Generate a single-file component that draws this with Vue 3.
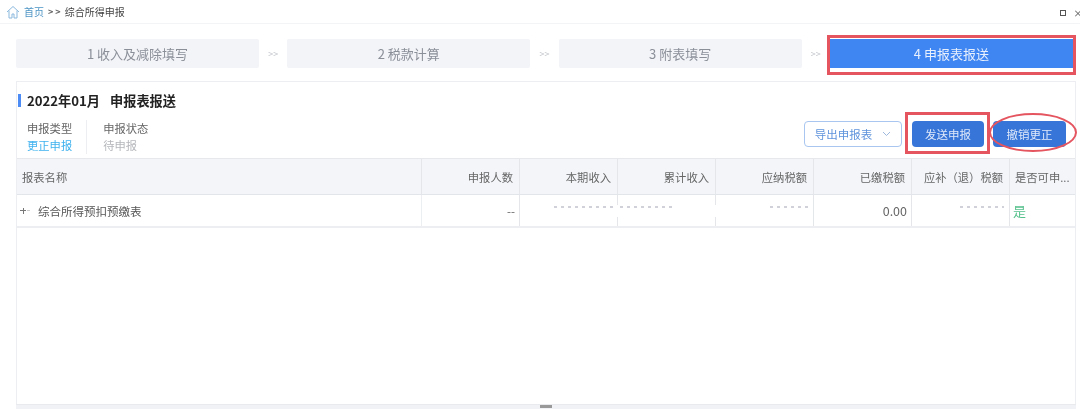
<script setup>
const steps = [
  { label: '1 收入及减除填写' },
  { label: '2 税款计算' },
  { label: '3 附表填写' },
  { label: '4 申报表报送', active: true },
]
const cols = ['申报人数', '本期收入', '累计收入', '应纳税额', '已缴税额', '应补（退）税额']
</script>

<template>
  <div class="page">
    <header class="crumb">
      <svg class="home" width="14" height="14" viewBox="0 0 14 14" fill="none" stroke="#8bb9de" stroke-width="1">
        <path d="M1 7 7 1.5 13 7M3 5.6V13h3V9h2v4h3V5.6" />
      </svg>
      <span class="link">首页</span>
      <span class="sep">&gt; &gt;</span>
      <span class="cur">综合所得申报</span>
      <span class="win">
        <i class="max"></i>
        <svg width="5" height="7" viewBox="0 0 5 7" fill="none" stroke="#555" stroke-width="1"><path d="M0 .5l6 6M6 .5l-6 6" /></svg>
      </span>
    </header>

    <nav class="steps">
      <template v-for="(s, i) in steps" :key="s.label">
        <span v-if="i" class="arrow">&gt;&gt;</span>
        <div class="step" :class="{ active: s.active }">{{ s.label }}</div>
      </template>
    </nav>

    <section class="panel">
      <h2 class="title">2022年01月<span class="title-sub">申报表报送</span></h2>

      <div class="toolbar">
        <div class="meta">
          <div class="meta-item first">
            <div class="k">申报类型</div>
            <div class="v cyan">更正申报</div>
          </div>
          <div class="meta-item">
            <div class="k">申报状态</div>
            <div class="v grey">待申报</div>
          </div>
        </div>
        <div class="actions">
          <button class="btn outline">
            导出申报表
            <svg width="9" height="6" viewBox="0 0 9 6" fill="none" stroke="#9db8dc" stroke-width="1"><path d="M1 1l3.5 3.5L8 1" /></svg>
          </button>
          <button class="btn solid send">发送申报</button>
          <button class="btn solid undo">撤销更正</button>
        </div>
      </div>

      <div class="thead row">
        <div class="cell name">报表名称</div>
        <div v-for="c in cols" :key="c" class="cell num">{{ c }}</div>
        <div class="cell last">是否可申...</div>
      </div>

      <div class="tbody row">
        <div class="cell name body-name">
          <i class="plus"></i>
          综合所得预扣预缴表
        </div>
        <div class="cell num">--</div>
        <div class="cell num blank gap"><i class="trace t1"></i></div>
        <div class="cell num blank gap"><i class="trace t2"></i></div>
        <div class="cell num blank"><i class="trace t3"></i></div>
        <div class="cell num zero">0.00</div>
        <div class="cell num blank"><i class="trace t4"></i></div>
        <div class="cell last green">是</div>
      </div>

      <div class="spacer"></div>
    </section>

    <footer class="foot"><i class="handle"></i></footer>
  </div>
</template>

<style scoped>
.page {
  width: 1080px;
  height: 409px;
  overflow: hidden;
  display: flex;
  flex-direction: column;
  background: #fff;
  font-family: "Noto Sans CJK SC", "Noto Sans", sans-serif;
  filter: blur(0.4px);
}
.crumb {
  height: 24px;
  flex: none;
  box-sizing: border-box;
  border-bottom: 1px solid #f3f4f6;
  display: flex;
  align-items: center;
  padding-left: 6px;
  font-size: 10px;
  color: #444;
}
.home { margin-right: 4px; }
.link { color: #4d94c4; }
.sep { margin: 0 4px 0 4px; font-size: 9px; font-weight: 700; color: #666; }
.win {
  margin-left: auto;
  display: flex;
  align-items: center;
  gap: 9px;
  padding-top: 3px;
}
.max { width: 4px; height: 4px; border: 1px solid #555; }
.steps {
  display: flex;
  align-items: center;
  margin: 15px 8px 0 16px;
  height: 29px;
  flex: none;
}
.step {
  flex: none;
  width: 243px;
  height: 29px;
  line-height: 29px;
  text-align: center;
  background: #f3f4f8;
  border-radius: 2px;
  color: #8a8f98;
  font-size: 13px;
}
.step.active {
  position: relative;
  background: #3f86f2;
  color: #e8f0fd;
  border-radius: 0;
}
.step.active::after {
  content: "";
  position: absolute;
  left: -3px;
  top: -4px;
  right: -3px;
  bottom: -7px;
  border: 3px solid #e45560;
  box-shadow: inset 0 -3px 0 #fff;
}
.arrow {
  flex: none;
  width: 28.3px;
  text-align: center;
  color: #c2c5ca;
  font-size: 9px;
}
.panel {
  flex: 1;
  margin: 13px 4px 0 16px;
  border: 1px solid #eceef1;
  border-bottom: 0;
  display: flex;
  flex-direction: column;
  min-height: 0;
}
.title {
  position: relative;
  margin: 9px 0 0 10px;
  font-size: 13.2px;
  line-height: 19px;
  font-weight: 700;
  color: #222;
}
.title-sub { margin-left: 10px; }
.title::before {
  content: "";
  position: absolute;
  left: -9px;
  top: 3px;
  width: 3px;
  height: 13px;
  background: #4d8cf5;
}
.toolbar {
  display: flex;
  justify-content: space-between;
  align-items: flex-start;
  height: 38px;
  margin-top: 10px;
}
.meta { display: flex; padding-left: 10px; }
.meta-item { font-size: 11.3px; line-height: 17px; }
.meta-item.first {
  padding-right: 14px;
  margin-right: 16px;
  border-right: 1px solid #eceef1;
}
.k { color: #666; }
.v.cyan { color: #3fb2ee; }
.v.grey { color: #b5b7bb; }
.actions {
  display: flex;
  align-items: center;
  gap: 10px;
  padding: 1px 9px 0 0;
}
.btn {
  height: 26px;
  box-sizing: border-box;
  border-radius: 4px;
  font: inherit;
  font-size: 11.5px;
  padding: 0;
}
.outline {
  width: 98px;
  border: 1px solid #a9c6f0;
  background: #fff;
  color: #5f93dc;
  display: flex;
  align-items: center;
  justify-content: center;
  gap: 10px;
}
.solid {
  width: 72px;
  border: 0;
  background: #3875d8;
  color: #dfe9fa;
  position: relative;
}
.send::after {
  content: "";
  position: absolute;
  left: -7px;
  top: -9px;
  right: -6px;
  bottom: -7px;
  border: 3px solid #e45560;
}
.undo { width: 73px; margin-left: -1px; }
.undo::after {
  content: "";
  position: absolute;
  left: -4px;
  top: -8px;
  right: -11px;
  bottom: -5px;
  border: 2.5px solid #e45560;
  border-radius: 50%;
}
.row {
  display: flex;
  flex: none;
  box-sizing: border-box;
}
.thead {
  height: 37px;
  background: #f3f5f9;
  border-top: 1px solid #e6e8ec;
  border-bottom: 1px solid #e2e5ea;
  color: #666;
  font-size: 11.3px;
}
.tbody {
  height: 33px;
  border-bottom: 2px solid #eceef1;
  color: #555;
  font-size: 11.5px;
}
.cell {
  box-sizing: border-box;
  display: flex;
  align-items: center;
  border-right: 1px solid #e4e6ea;
  flex: none;
}
.name {
  width: 405px;
  padding-left: 5px;
}
.body-name {
  padding-left: 3px;
  gap: 12px;
  border-right-color: #eceef1;
}
.num {
  width: 98px;
  justify-content: flex-end;
  padding-right: 6px;
}
.tbody .num { color: #666; padding-right: 4px; }
.tbody .zero { font-size: 12.5px; }
.blank { position: relative; }
.gap::after {
  content: "";
  position: absolute;
  right: -1px;
  top: 10px;
  width: 2px;
  height: 12px;
  background: #fff;
}
.last {
  width: 65px;
  padding-left: 5px;
  border-right: 0;
  white-space: nowrap;
}
.green { color: #55c08b; padding-left: 3px; font-size: 13px; }
.plus {
  position: relative;
  width: 6px;
  height: 6px;
  background:
    linear-gradient(#777, #777) center / 6px 1px no-repeat,
    linear-gradient(#777, #777) center / 1px 6px no-repeat;
}
.plus::after {
  content: "";
  position: absolute;
  left: 7px;
  top: 2.5px;
  width: 3px;
  height: 1px;
  background: #ccc;
}
.trace {
  position: absolute;
  top: 11px;
  height: 2px;
  background-image: linear-gradient(90deg, #99a 0 3px, transparent 3px 7px);
  background-size: 7px 2px;
  opacity: 0.45;
}
.t1 { left: 34px; width: 62px; }
.t2 { left: 2px; width: 56px; }
.t3 { left: 54px; width: 40px; }
.t4 { left: 48px; width: 44px; }
.spacer { flex: 1; }
.foot {
  flex: none;
  height: 5px;
  margin: 0 4px 0 16px;
  background: #f1f2f5;
  border-top: 1px solid #e9eaee;
  box-sizing: border-box;
  display: flex;
  justify-content: center;
}
.handle {
  width: 12px;
  height: 3px;
  background: #999;
}
</style>
